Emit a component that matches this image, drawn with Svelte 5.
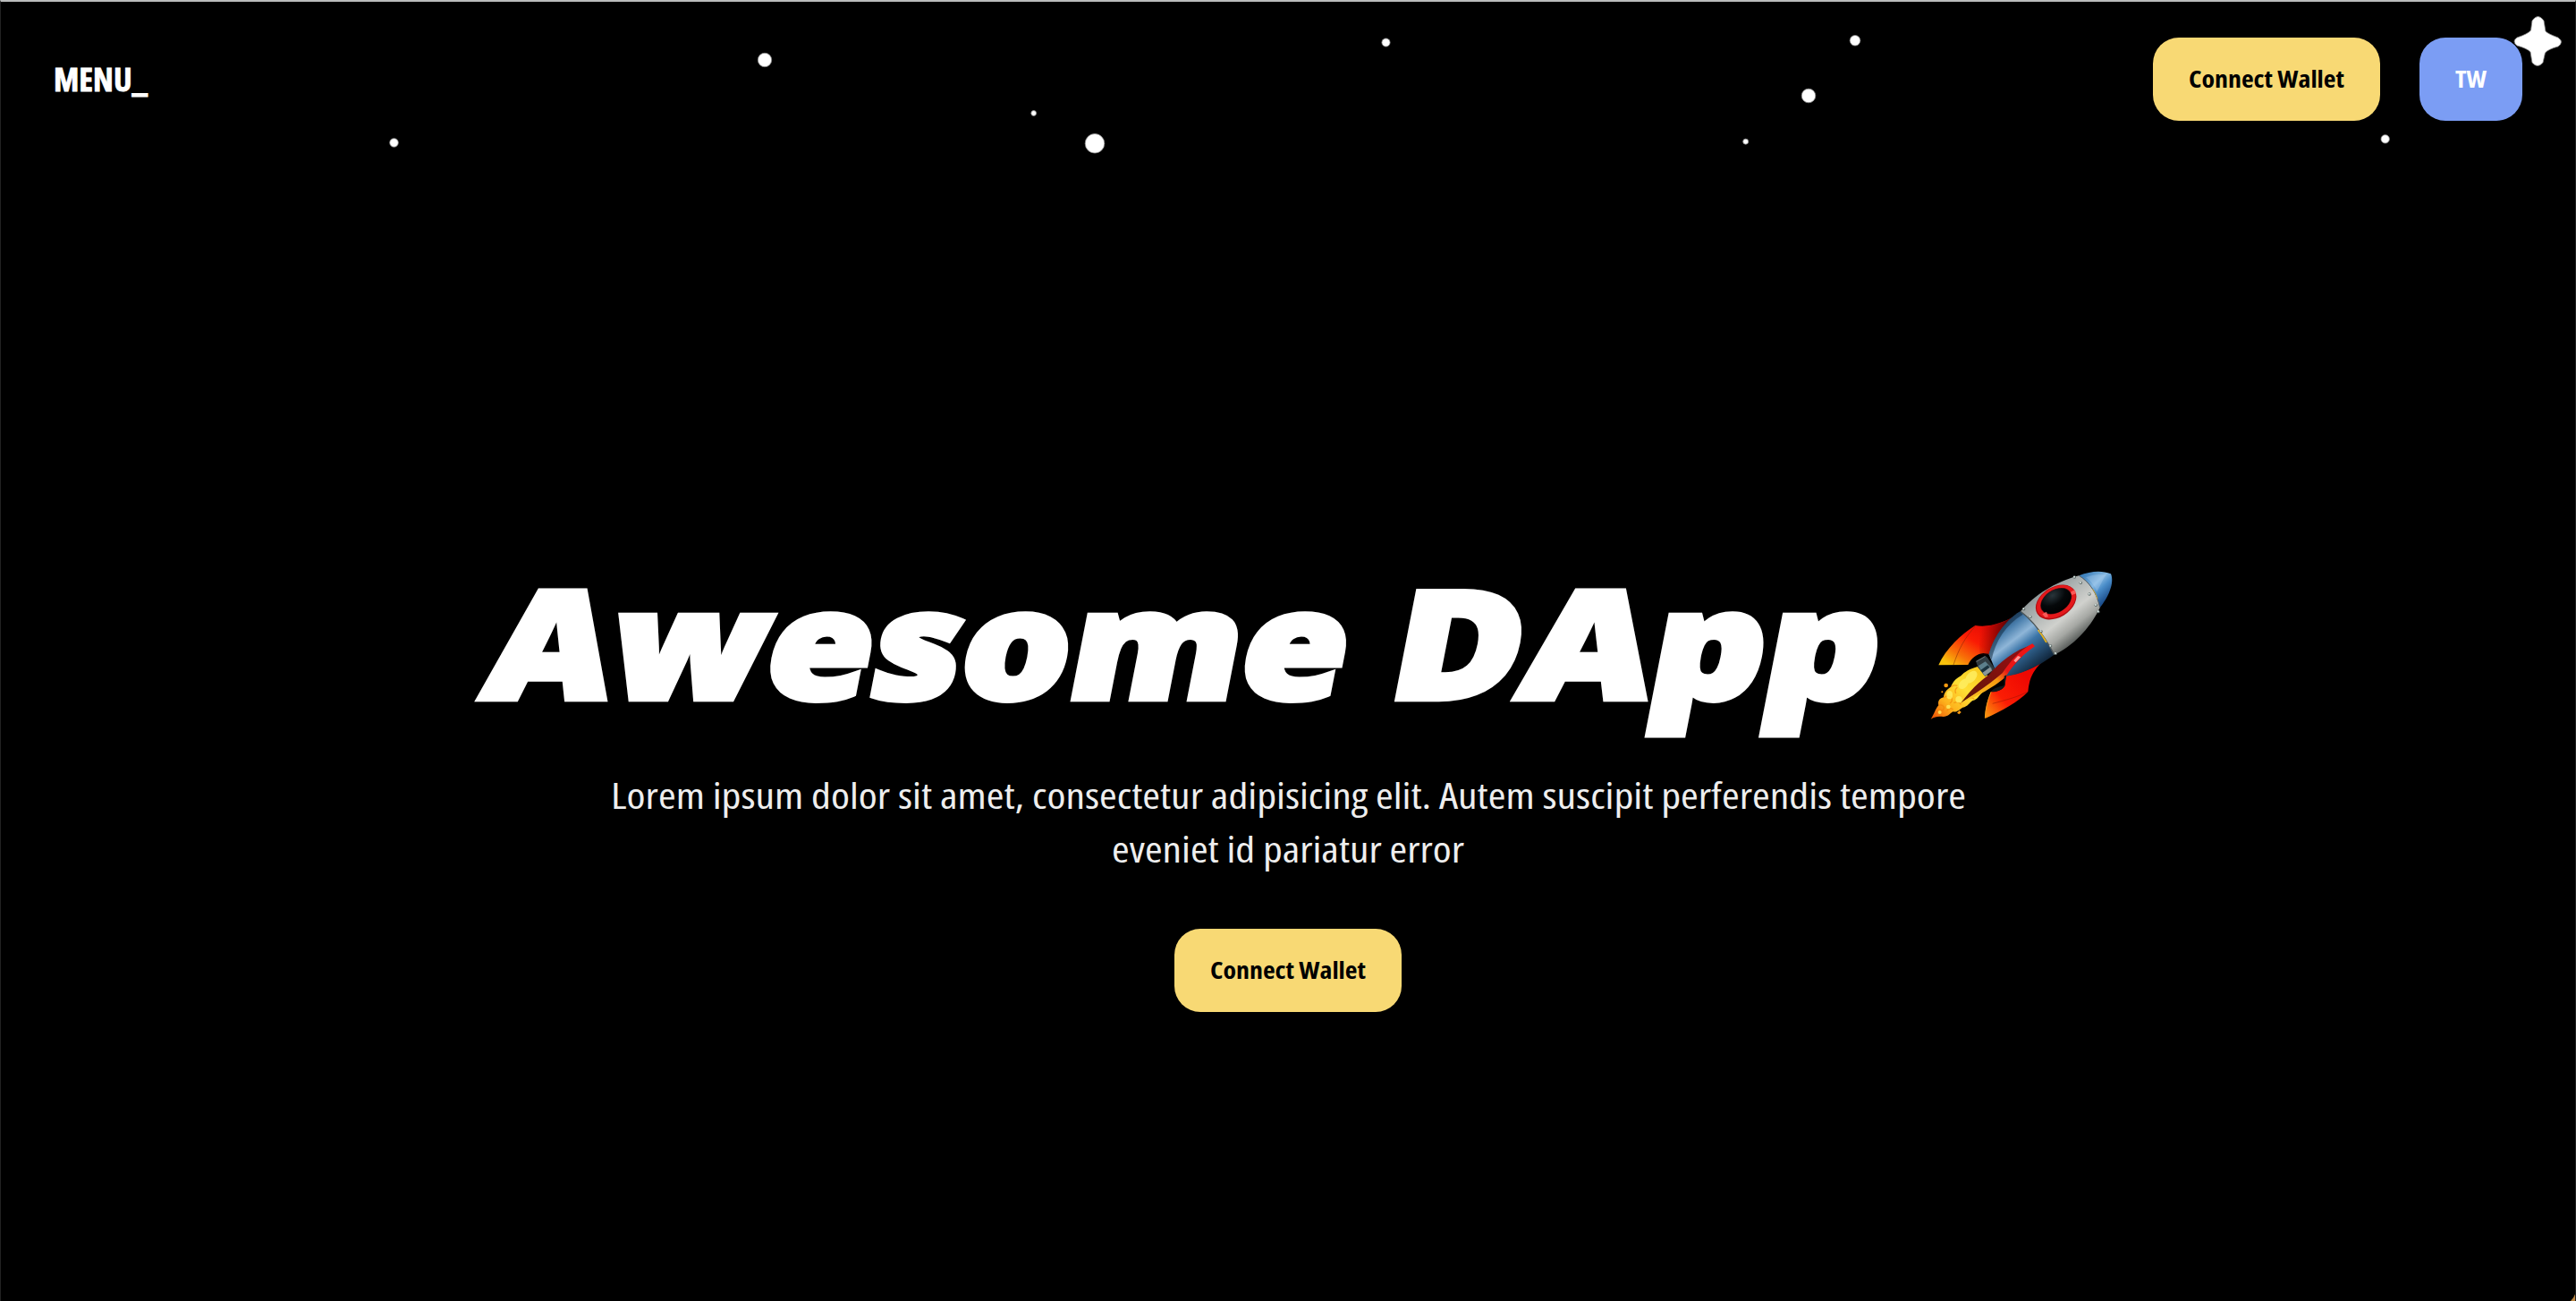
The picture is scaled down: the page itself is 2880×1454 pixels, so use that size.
<script>
  const stars = [
    { x: 440.5, y: 159.5, r: 4.8 },
    { x: 855, y: 67, r: 7.7 },
    { x: 1155.7, y: 126.5, r: 2.9 },
    { x: 1224, y: 160.3, r: 10.8 },
    { x: 1549.5, y: 47.5, r: 4.6 },
    { x: 1951.7, y: 158.2, r: 3 },
    { x: 2022, y: 107, r: 7.8 },
    { x: 2074, y: 45.3, r: 5.8 },
    { x: 2666.7, y: 155.4, r: 4.7 }
  ];
  const rivets = [
    [568, 75], [589, 94], [618, 132], [640, 169], [648, 191],
    [398, 182], [420, 208], [456, 257], [488, 306], [505, 331]
  ];
</script>

{#snippet label(text, width, height, baseline, kind)}
  <svg class="label {kind}" {width} {height}>
    <text x="0" y={baseline} textLength={width} lengthAdjust="spacingAndGlyphs">{text}</text>
  </svg>
{/snippet}

<div class="page">
  <header>
    <a class="menu" href="#menu">{@render label('MENU_', 105, 60, 43, 'brand')}</a>
    <nav>
      <button class="wallet">{@render label('Connect Wallet', 174, 40, 29, 'action')}</button>
      <button class="lang">{@render label('TW', 35, 40, 29, 'action')}</button>
    </nav>
  </header>

  <main>
    <h1>
      <svg class="title" width="1630" height="200">
        <text transform="translate(36 151) skewX(-11)" textLength="962" lengthAdjust="spacingAndGlyphs">Awesome</text>
        <text transform="translate(1048 151) skewX(-11)" textLength="545" lengthAdjust="spacingAndGlyphs">DApp</text>
      </svg>
      <svg class="rocket" width="250" height="200" viewBox="0 0 750 600" aria-hidden="true">
        <defs>
          <linearGradient id="hull" gradientUnits="userSpaceOnUse" x1="455" y1="120" x2="590" y2="290">
            <stop offset="0" stop-color="#8e9697" />
            <stop offset=".22" stop-color="#aab0b0" />
            <stop offset=".55" stop-color="#d0d1cd" />
            <stop offset=".75" stop-color="#a6a8a4" />
            <stop offset="1" stop-color="#424745" />
          </linearGradient>
          <linearGradient id="nose" gradientUnits="userSpaceOnUse" x1="610" y1="60" x2="685" y2="140">
            <stop offset="0" stop-color="#3f82bd" />
            <stop offset=".42" stop-color="#86b9e2" />
            <stop offset=".65" stop-color="#4a8dc9" />
            <stop offset="1" stop-color="#1d4f8c" />
          </linearGradient>
          <linearGradient id="tail" gradientUnits="userSpaceOnUse" x1="325" y1="230" x2="440" y2="380">
            <stop offset="0" stop-color="#2c5580" />
            <stop offset=".15" stop-color="#4a7fad" />
            <stop offset=".36" stop-color="#8fb6d8" />
            <stop offset=".55" stop-color="#3b75a8" />
            <stop offset="1" stop-color="#10263c" />
          </linearGradient>
          <linearGradient id="fin1" gradientUnits="userSpaceOnUse" x1="260" y1="220" x2="160" y2="375">
            <stop offset="0" stop-color="#e30a05" />
            <stop offset=".4" stop-color="#fa1b04" />
            <stop offset=".75" stop-color="#f87008" />
            <stop offset="1" stop-color="#f8c20c" />
          </linearGradient>
          <linearGradient id="fin1shade" gradientUnits="userSpaceOnUse" x1="250" y1="270" x2="345" y2="290">
            <stop offset="0" stop-color="#700" stop-opacity="0" />
            <stop offset="1" stop-color="#300" stop-opacity=".95" />
          </linearGradient>
          <linearGradient id="fin2" gradientUnits="userSpaceOnUse" x1="400" y1="400" x2="262" y2="520">
            <stop offset="0" stop-color="#ee0802" />
            <stop offset=".6" stop-color="#fb1d04" />
            <stop offset="1" stop-color="#fa8a0c" />
          </linearGradient>
          <linearGradient id="fin3" gradientUnits="userSpaceOnUse" x1="330" y1="350" x2="200" y2="490">
            <stop offset="0" stop-color="#8c1010" />
            <stop offset="1" stop-color="#5e1608" />
          </linearGradient>
          <linearGradient id="edge" gradientUnits="userSpaceOnUse" x1="430" y1="300" x2="190" y2="500">
            <stop offset="0" stop-color="#f01414" />
            <stop offset=".4" stop-color="#e81616" />
            <stop offset=".55" stop-color="#f69a10" />
            <stop offset="1" stop-color="#f8d028" />
          </linearGradient>
          <linearGradient id="flame" gradientUnits="userSpaceOnUse" x1="245" y1="390" x2="95" y2="545">
            <stop offset="0" stop-color="#f9cc20" />
            <stop offset=".35" stop-color="#ffdf35" />
            <stop offset=".7" stop-color="#fdb21c" />
            <stop offset="1" stop-color="#ee5a08" />
          </linearGradient>
          <radialGradient id="glass" cx=".5" cy=".2" r=".85">
            <stop offset="0" stop-color="#29353b" />
            <stop offset=".5" stop-color="#05080a" />
            <stop offset="1" stop-color="#000" />
          </radialGradient>
        </defs>

        <path fill="url(#flame)" d="M243 375C218 382 199 392 187 406C168 416 159 428 153 443C138 452 130 464 129 478C113 481 109 493 112 505C101 516 98 534 86 551C102 541 113 541 128 543C144 543 150 533 160 526C174 529 182 519 193 512C211 509 215 496 226 489C244 485 247 471 260 461L283 410Z" />
        <g fill="none" stroke="#f07f08" stroke-width="4" opacity=".6">
          <path d="M153 443q10-8 22-4M129 480q14-12 25-2q8 11-4 20M112 505q14-5 19 8q-4 12-18 10M163 497q17-8 24 5M205 485q14-11 27-1M170 465q-6-12 5-20M140 523q8-13 21-4" />
        </g>
        <g fill="#ffef63" opacity=".8">
          <ellipse cx="196" cy="433" rx="20" ry="13" transform="rotate(-48 196 433)" />
          <ellipse cx="149" cy="470" rx="10" ry="14" />
          <ellipse cx="222" cy="410" rx="24" ry="15" transform="rotate(-48 222 410)" />
          <circle cx="180" cy="485" r="11" />
          <circle cx="116" cy="528" r="6" />
          <circle cx="145" cy="510" r="7" />
        </g>
        <g fill="#f89a10">
          <circle cx="137" cy="438" r="7" />
          <circle cx="124" cy="460" r="3" />
          <path d="M174 530l8-8l6 6l-7 7z" />
        </g>

        <path fill="url(#fin1)" d="M374 202C332 228 281 245 235 237C188 267 136 315 112 370L211 369C222 346 240 333 262 330L292 334Z" />
        <path fill="url(#fin1shade)" d="M374 202C332 228 281 245 245 240L250 335L292 334Z" />
        <path fill="none" stroke="#7c2206" stroke-width="2" opacity=".75" d="M236 239C200 278 180 315 162 369" />
        <path fill="url(#fin2)" d="M338 406C385 398 420 386 458 361C427 390 415 421 412 459C380 493 325 523 268 549C268 515 277 485 288 460C309 461 329 451 334 438Z" />
        <path fill="none" stroke="#8b1604" stroke-width="2" opacity=".7" d="M411 459C380 476 338 487 293 499" />
        <path fill="none" stroke="#f5a018" stroke-width="3" d="M268 547C269 515 278 485 288 460" />

        <path fill="url(#tail)" d="M386 190C332 222 294 283 281 334L301 383L338 407C393 400 448 373 500 335C478 275 438 221 386 190Z" />
        <path fill="#0c2338" opacity=".5" d="M386 190C332 222 294 283 281 334L290 352C302 290 338 234 395 200Z" />

        <path fill="#303b40" d="M237 356L269 339L276 345L302 384L268 408L244 377Z" />
        <path fill="#5c7f8b" d="M245 373L269 358L291 382L266 406Z" />
        <path fill="#1b333e" d="M253 387l24-17l7 8l-24 18z" />
        <path fill="#8b979a" d="M260 395l24-17l8 10l-24 18z" />
        <path fill="none" stroke="#707779" stroke-width="3" d="M239 358l29-17" />

        <path fill="url(#fin3)" d="M430 300C363 321 318 360 281 402C240 431 211 465 187 497C240 461 303 430 338 402C363 373 391 341 430 300Z" />
        <path fill="url(#edge)" d="M427 298C390 316 354 354 326 397C280 437 233 466 187 497C235 478 295 446 338 409C363 366 395 335 435 307Z" />
        <path fill="#ff9a97" d="M364 355l14-16l10 4l-17 18z" />
        <path fill="#11191c" d="M288 459C295 448 312 443 332 438V407L340 403L334 440C325 453 307 460 288 459Z" />

        <path fill="url(#hull)" d="M583 70C512 88 435 132 387 190C434 225 470 278 500 335C558 310 619 250 653 178C645 132 619 91 583 70Z" />
        <path fill="none" stroke="#4b5558" stroke-width="4" d="M387 190C434 225 470 278 500 335" />
        <path fill="none" stroke="#e9b51d" stroke-width="5" d="M446 252q15 20 28 42" />
        <path fill="url(#nose)" d="M583 70C622 54 660 52 690 64C703 96 681 143 653 178C645 132 619 91 583 70Z" />
        <path fill="#d5eaff" opacity=".22" d="M606 76C638 63 660 68 676 66C664 79 656 101 643 124C635 102 620 85 606 76Z" />
        <path fill="none" stroke="#59636a" stroke-width="3" d="M583 70C619 91 645 132 653 178" />
        <path fill="none" stroke="#c9a63c" stroke-width="3" d="M629 115q11 15 16 33" />

        <g transform="rotate(-32 506 159)">
          <ellipse cx="506" cy="159" rx="74" ry="51" fill="#b20d10" />
          <ellipse cx="507" cy="158" rx="71" ry="48" fill="#e4181b" />
          <ellipse cx="508" cy="156" rx="57" ry="38" fill="#5b0c10" />
          <ellipse cx="508" cy="156" rx="55" ry="37" fill="url(#glass)" />
        </g>
        <path fill="#ff6a68" opacity=".8" d="M460 199l14-8l6 17l-10 2zM555 125l14-8l5 13l-15 5z" />
        {#each rivets as [x, y]}
          <circle cx={x} cy={y} r="5" fill="#5d6967" />
          <circle cx={x - 1} cy={y - 1} r="3" fill="#dfebe8" />
        {/each}
      </svg>
    </h1>

    <p>
      {@render label('Lorem ipsum dolor sit amet, consectetur adipisicing elit. Autem suscipit perferendis tempore', 1515, 60, 40.5, 'copy')}
      {@render label('eveniet id pariatur error', 394, 60, 40.5, 'copy')}
    </p>

    <button class="wallet">{@render label('Connect Wallet', 174, 40, 29, 'action')}</button>
  </main>

  <svg class="sky" width="2880" height="180" aria-hidden="true">
    {#each stars as s}
      <circle cx={s.x} cy={s.y} r={s.r} />
    {/each}
    <path d="M2831 23Q2837.500 14 2844 23L2846 35Q2849 38 2860 42Q2867 47 2860 52Q2849 55 2845.500 59L2843 70Q2837 77 2831 70L2829 58Q2825 54 2814 51Q2808 46 2814 42Q2826 38 2829.500 34Z" />
  </svg>
  <svg class="corner" width="14" height="14" aria-hidden="true">
    <path d="M14 2V14H8Q13 9 14 2Z" />
  </svg>
</div>

<style>
  :global(body) {
    background: #000;
  }
  .page {
    position: relative;
    box-sizing: border-box;
    width: 2880px;
    height: 1454px;
    overflow: hidden;
    background: #000;
    border-top: 2px solid #bbbdbd;
    border-left: 1px solid #222;
    border-right: 1px solid #222;
    color: #fff;
    font-family: 'Open Sans', 'Noto Sans', sans-serif;
    display: flex;
    flex-direction: column;
  }
  header {
    height: 173px;
    box-sizing: border-box;
    padding: 0 59px;
    display: flex;
    align-items: center;
    justify-content: space-between;
  }
  .menu {
    display: flex;
    color: #fff;
  }
  nav {
    display: flex;
    gap: 44px;
  }
  button {
    box-sizing: border-box;
    height: 93px;
    padding: 0;
    border: 0;
    border-radius: 29px;
    display: flex;
    align-items: center;
    justify-content: center;
    font-family: inherit;
  }
  .wallet {
    width: 254px;
    background: #f8d974;
    color: #000;
  }
  .lang {
    width: 115px;
    background: #7b9df4;
    color: #fff;
  }
  svg {
    display: block;
    overflow: visible;
  }
  .label text,
  .title text {
    fill: currentColor;
  }
  .label {
    font-stretch: 75%;
  }
  .action {
    font-size: 27.5px;
    font-weight: 700;
  }
  .brand {
    font-size: 35.5px;
    font-weight: 700;
  }
  .brand text {
    stroke: currentColor;
    stroke-width: 0.8px;
  }
  .copy {
    font-size: 40px;
    font-weight: 400;
    color: #eee;
  }
  main {
    display: flex;
    flex-direction: column;
    align-items: center;
    padding-top: 455px;
  }
  h1 {
    margin: 0;
    display: flex;
  }
  .title {
    font-family: 'Open Sans', sans-serif;
    font-size: 168px;
    font-weight: 800;
  }
  .title text {
    stroke: currentColor;
    stroke-width: 6.5px;
  }
  .rocket {
    margin-top: -10px;
  }
  p {
    margin: 33px 0 55px;
    display: flex;
    flex-direction: column;
    align-items: center;
  }
  .sky {
    position: absolute;
    top: -2px;
    left: -1px;
    fill: #fff;
    stroke: #888;
    stroke-width: 0.8;
    pointer-events: none;
  }
  .corner {
    position: absolute;
    right: -1px;
    bottom: 0;
    fill: #b98642;
  }
</style>
